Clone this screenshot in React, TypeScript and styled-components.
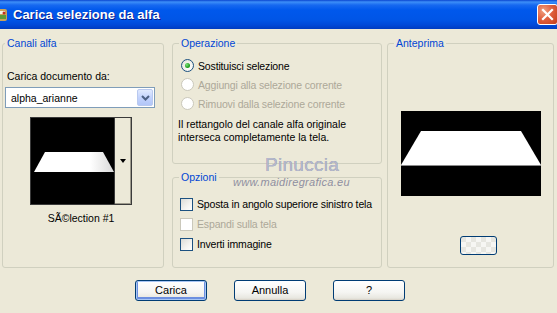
import React from "react";
import styled, { createGlobalStyle, css } from "styled-components";

const Global = createGlobalStyle`
    html, body {
        margin: 0;
        padding: 0;
        background: #ece9d8;
        overflow: hidden;
    }
    body {
        font-family: "Liberation Sans", Tahoma, Arial, sans-serif;
        font-size: 10.5px;
        color: #000;
    }
`;

const Window = styled.div`
    position: relative;
    width: 557px;
    height: 313px;
    display: flex;
    flex-direction: column;
    background: #ece9d8;
    overflow: hidden;
`;

const TitleBar = styled.div`
    height: 29px;
    flex: none;
    display: flex;
    align-items: center;
    background: linear-gradient(
        to bottom,
        #0a45d0 0px,
        #3d8ff8 2px,
        #1769f0 5px,
        #0058ec 10px,
        #0055e6 20px,
        #0049d8 25px,
        #003cc0 29px
    );
`;

const AppIcon = styled.svg`
    width: 11px;
    height: 18px;
    margin-left: -2px;
    flex: none;
`;

const TitleText = styled.div`
    margin-left: 4px;
    color: #fff;
    font-weight: bold;
    font-size: 13px;
    text-shadow: 1px 1px 0 #0a1a8a;
    flex: 1;
`;

const CloseButton = styled.div`
    width: 21px;
    height: 21px;
    box-sizing: border-box;
    margin-right: -1px;
    border: 1px solid #fff;
    border-radius: 3px;
    background: radial-gradient(circle at 30% 30%, #f0a080 0%, #e06040 45%, #c43c18 100%);
    display: flex;
    align-items: center;
    justify-content: center;
`;

const Body = styled.div`
    flex: 1;
    display: flex;
    flex-direction: column;
    padding: 8px 0 0 2px;
`;

const Main = styled.div`
    height: 231px;
    display: grid;
    grid-template-columns: 162px 210px 164px;
    column-gap: 8px;
`;

const Column = styled.div`
    display: flex;
    flex-direction: column;
    gap: 7px;
    min-width: 0;
`;

const Group = styled.fieldset<{ $h?: number; $shift?: number }>`
    margin: 0 0 0 ${(p) => p.$shift ?? 0}px;
    padding: 0;
    min-width: 0;
    min-inline-size: 0;
    box-sizing: border-box;
    ${(p) =>
        p.$h
            ? css`
                  height: ${p.$h}px;
                  flex: none;
              `
            : css`
                  flex: 1;
              `}
    border: 1px solid #d0d0bf;
    border-radius: 3px;
    display: flex;
    flex-direction: column;
    overflow: hidden;
`;

const Legend = styled.legend<{ $indent: number }>`
    margin-left: ${(p) => p.$indent}px;
    padding: 0 2px;
    line-height: 13px;
    color: #0046d5;
`;

const FieldLabel = styled.div`
    margin: 20px 0 0 4px;
    line-height: 13px;
`;

const Combo = styled.div`
    margin: 4px 0 0 2px;
    width: 150px;
    height: 21px;
    box-sizing: border-box;
    border: 1px solid #7f9db9;
    background: #fff;
    display: flex;
    align-items: center;
    padding: 1px;
`;

const ComboText = styled.div`
    flex: 1;
    padding-left: 4px;
`;

const ComboButton = styled.div`
    width: 16px;
    height: 17px;
    box-sizing: border-box;
    border: 1px solid #b9c9ef;
    border-radius: 2px;
    background: linear-gradient(to bottom, #e1eafe 0%, #c3d3fd 50%, #b2c6f8 100%);
    display: flex;
    align-items: center;
    justify-content: center;
`;

const Thumb = styled.div`
    margin: 9px 0 0 27px;
    width: 102px;
    height: 88px;
    box-sizing: border-box;
    border: 1px solid #3a3a3a;
    display: flex;
`;

const ThumbImage = styled.svg`
    width: 83px;
    height: 86px;
    display: block;
`;

const Spin = styled.div`
    flex: 1;
    border-left: 1px solid #3a3a3a;
    box-shadow: inset -1px -1px 0 #9d9a8c;
    background: #ece9d8;
    display: flex;
    align-items: center;
    justify-content: center;
`;

const SpinArrow = styled.div`
    width: 0;
    height: 0;
    border-left: 3.5px solid transparent;
    border-right: 3.5px solid transparent;
    border-top: 4px solid #000;
`;

const Caption = styled.div`
    margin: 7px 0 0 27px;
    width: 102px;
    text-align: center;
    line-height: 13px;
`;

const OptionList = styled.div<{ $top: number; $row: number; $indent: number }>`
    margin: ${(p) => p.$top}px 0 0 ${(p) => p.$indent}px;
    display: grid;
    grid-auto-rows: ${(p) => p.$row}px;
`;

const Option = styled.div<{ $disabled?: boolean }>`
    display: flex;
    align-items: center;
    gap: 4px;
    white-space: nowrap;
    letter-spacing: -0.15px;
    color: ${(p) => (p.$disabled ? "#aca899" : "#000")};
`;

const Radio = styled.span<{ $disabled?: boolean; $checked?: boolean }>`
    width: 13px;
    height: 13px;
    box-sizing: border-box;
    border-radius: 50%;
    flex: none;
    border: 1px solid ${(p) => (p.$disabled ? "#cac8bb" : "#1c5180")};
    background: ${(p) =>
        p.$disabled ? "#fff" : "radial-gradient(circle at 65% 65%, #fff 0%, #f4f4f0 40%, #dcdcd4 100%)"};
    display: flex;
    align-items: center;
    justify-content: center;
    &::after {
        content: "";
        display: ${(p) => (p.$checked ? "block" : "none")};
        width: 5px;
        height: 5px;
        border-radius: 50%;
        background: radial-gradient(circle at 35% 35%, #7de07d 0%, #21a121 60%, #1a7a1a 100%);
    }
`;

const Check = styled.span<{ $disabled?: boolean }>`
    width: 13px;
    height: 13px;
    box-sizing: border-box;
    flex: none;
    border: 1px solid ${(p) => (p.$disabled ? "#cac8bb" : "#1c5180")};
    background: ${(p) =>
        p.$disabled ? "#fff" : "linear-gradient(135deg, #dcdcd7 0%, #f4f4f0 60%, #fff 100%)"};
`;

const Note = styled.div`
    margin: 5px 0 0 5px;
    line-height: 13px;
`;

const Preview = styled.svg`
    margin: 61px 0 0 13px;
    width: 140px;
    height: 85px;
    display: block;
`;

const SmallButton = styled.div`
    margin: 40px 0 0 72px;
    width: 37px;
    height: 19px;
    box-sizing: border-box;
    border: 1px solid #003c74;
    border-radius: 3px;
    background: repeating-conic-gradient(#f6f6f3 0% 25%, #e6e6e0 0% 50%) 0 0 / 10px 10px;
`;

const ButtonRow = styled.div`
    margin-top: 12px;
    padding-left: 133px;
    display: flex;
    gap: 27px;
`;

const Button = styled.div<{ $default?: boolean }>`
    width: 72px;
    height: 21px;
    box-sizing: border-box;
    border: 1px solid #003c74;
    border-radius: 3px;
    background: linear-gradient(to bottom, #ffffff 0%, #f5f5f2 60%, #e8e7e0 90%, #d6d0c5 100%);
    display: flex;
    align-items: center;
    justify-content: center;
    line-height: 13px;
    font-size: 11px;
    ${(p) =>
        p.$default &&
        css`
            box-shadow: inset 0 0 0 1px #a8c6f4, inset 0 -1px 0 2px #6c8fe0;
        `}
`;

const WatermarkName = styled.div`
    position: absolute;
    left: 265px;
    top: 154px;
    font-size: 19px;
    letter-spacing: 0.3px;
    color: #b4b8cc;
    text-shadow: 0 0 0.5px #7d8199;
`;

const WatermarkSite = styled.div`
    position: absolute;
    left: 233px;
    top: 176px;
    font-size: 11px;
    font-style: italic;
    letter-spacing: 0.3px;
    color: #8f8fa0;
`;

export default function App() {
    return (
        <>
            <Global />
            <Window>
                <TitleBar>
                    <AppIcon viewBox="0 0 11 18">
                        <rect x="0" y="3" width="9" height="12" rx="2" fill="#c9a25a" />
                        <rect x="1" y="5" width="6" height="3" fill="#f2f2e6" />
                        <rect x="2" y="9" width="6" height="4" fill="#5a9a3a" />
                        <circle cx="6" cy="7" r="1.5" fill="#c03020" />
                    </AppIcon>
                    <TitleText>Carica selezione da alfa</TitleText>
                    <CloseButton>
                        <svg width="13" height="13" viewBox="0 0 13 13">
                            <path d="M2 2 L11 11 M11 2 L2 11" stroke="#fff" strokeWidth="2.2" strokeLinecap="square" />
                        </svg>
                    </CloseButton>
                </TitleBar>
                <Body>
                    <Main>
                        <Group>
                            <Legend $indent={2}>Canali alfa</Legend>
                            <FieldLabel>Carica documento da:</FieldLabel>
                            <Combo>
                                <ComboText>alpha_arianne</ComboText>
                                <ComboButton>
                                    <svg width="9" height="6" viewBox="0 0 9 6">
                                        <path d="M1 1 L4.5 4.5 L8 1" stroke="#4d6185" strokeWidth="2" fill="none" />
                                    </svg>
                                </ComboButton>
                            </Combo>
                            <Thumb>
                                <ThumbImage viewBox="0 0 83 86">
                                    <defs>
                                        <linearGradient id="tg" x1="0" y1="0" x2="1" y2="0">
                                            <stop offset="0" stopColor="#fff" />
                                            <stop offset="0.7" stopColor="#fff" />
                                            <stop offset="1" stopColor="#d8d8d8" />
                                        </linearGradient>
                                    </defs>
                                    <rect width="83" height="86" fill="#000" />
                                    <polygon points="3,54 14,34 72,34 83,54" fill="url(#tg)" />
                                </ThumbImage>
                                <Spin>
                                    <SpinArrow />
                                </Spin>
                            </Thumb>
                            <Caption>SÃ©lection #1</Caption>
                        </Group>
                        <Column>
                            <Group $h={127}>
                                <Legend $indent={6}>Operazione</Legend>
                                <OptionList $top={6} $row={19} $indent={8}>
                                    <Option>
                                        <Radio $checked />
                                        Sostituisci selezione
                                    </Option>
                                    <Option $disabled>
                                        <Radio $disabled />
                                        Aggiungi alla selezione corrente
                                    </Option>
                                    <Option $disabled>
                                        <Radio $disabled />
                                        Rimuovi dalla selezione corrente
                                    </Option>
                                </OptionList>
                                <Note>
                                    Il rettangolo del canale alfa originale
                                    <br />
                                    interseca completamente la tela.
                                </Note>
                            </Group>
                            <Group>
                                <Legend $indent={6}>Opzioni</Legend>
                                <OptionList $top={10} $row={20} $indent={7}>
                                    <Option>
                                        <Check />
                                        Sposta in angolo superiore sinistro tela
                                    </Option>
                                    <Option $disabled>
                                        <Check $disabled />
                                        Espandi sulla tela
                                    </Option>
                                    <Option>
                                        <Check />
                                        Inverti immagine
                                    </Option>
                                </OptionList>
                            </Group>
                        </Column>
                        <Group $shift={-3}>
                            <Legend $indent={6}>Anteprima</Legend>
                            <Preview viewBox="0 0 140 85">
                                <rect width="140" height="85" fill="#000" />
                                <polygon points="0,54 20,20 120,20 140,54" fill="#fff" />
                                <rect x="0" y="54" width="140" height="1" fill="#8a8a8a" />
                            </Preview>
                            <SmallButton />
                        </Group>
                    </Main>
                    <ButtonRow>
                        <Button $default>Carica</Button>
                        <Button>Annulla</Button>
                        <Button>?</Button>
                    </ButtonRow>
                </Body>
                <WatermarkName>Pinuccia</WatermarkName>
                <WatermarkSite>www.maidiregrafica.eu</WatermarkSite>
            </Window>
        </>
    );
}
